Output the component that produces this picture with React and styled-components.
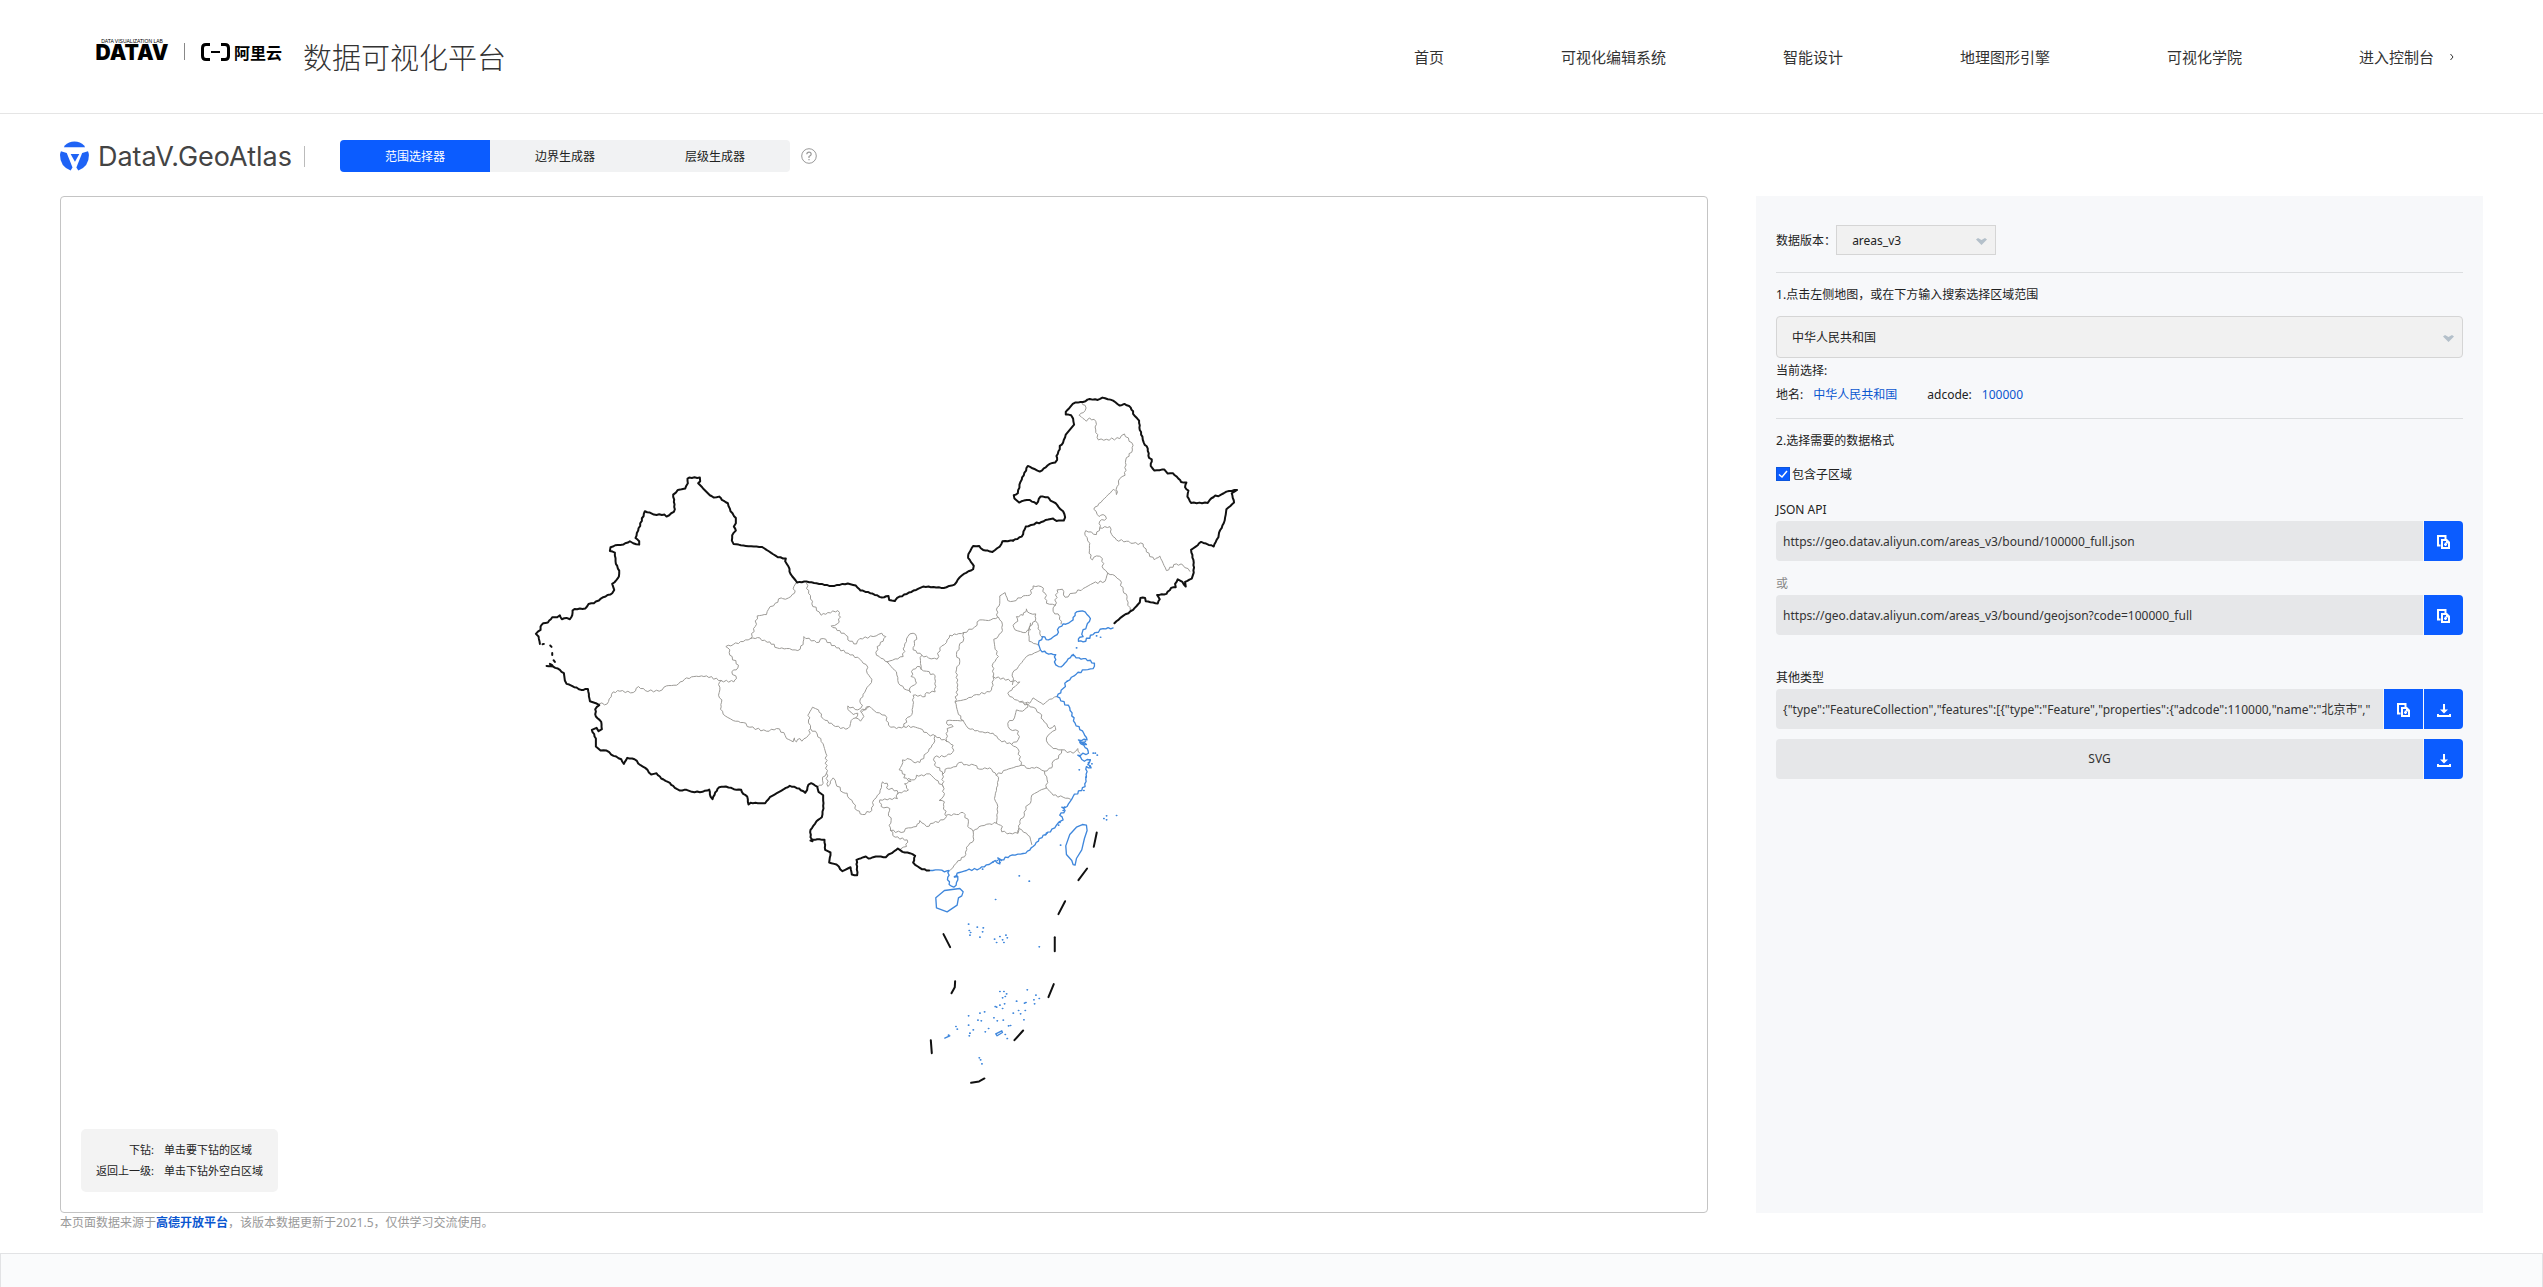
import React from 'react'
import styled, { createGlobalStyle } from 'styled-components'

const GlobalStyle = createGlobalStyle`
  * { box-sizing: border-box; }
  body {
    margin: 0;
    background: #fff;
    color: #222;
    font-family: "Noto Sans", "Noto Sans CJK SC", sans-serif;
    font-size: 12px;
  }
  a { text-decoration: none; }
  button, input, select { font: inherit; color: inherit; }
`

// ---------- header ----------

const Header = styled.header`
  display: flex;
  align-items: center;
  justify-content: space-between;
  height: 114px;
  padding: 0 89px 0 94px;
  border-bottom: 1px solid #e5e5e5;
`

const Brand = styled.div`
  display: flex;
  align-items: flex-start;
  height: 36px;
`

const DatavLogo = styled.div`
  display: flex;
  flex-direction: column;
  align-items: center;
  width: 76px;
  color: #000;
  font-family: Inter, "Liberation Sans", sans-serif;
  font-optical-sizing: none;
`

const LogoCaption = styled.span`
  font-family: "Liberation Sans", sans-serif;
  font-size: 5px;
  line-height: 5px;
  white-space: nowrap;
`

const LogoName = styled.span`
  font-size: 21px;
  font-weight: 900;
  line-height: 17px;
`

const Split = styled.span`
  width: 1px;
  height: ${p => p.$height};
  margin: ${p => p.$margin};
  background: ${p => p.$color};
`

const AliyunLogo = styled.div`
  display: flex;
  align-items: center;
  gap: 4px;
  height: 26px;
  color: #000;
  font-size: 16px;
  font-weight: 700;
`

const SiteTitle = styled.h1`
  margin: 0 0 0 21px;
  color: #333;
  font-size: 29px;
  font-weight: 300;
  line-height: 38px;
`

const Nav = styled.nav`
  display: flex;
  align-items: center;
  gap: 117px;
`

const NavLink = styled.a`
  display: flex;
  align-items: center;
  gap: 16px;
  color: #333;
  font-size: 15px;
  line-height: 20px;
`

// ---------- toolbar ----------

const Page = styled.div`
  padding: 26px 60px 0;
`

const Toolbar = styled.div`
  display: flex;
  align-items: center;
  height: 32px;
  margin-bottom: 24px;
`

const GeoLogo = styled.div`
  display: flex;
  align-items: center;
  gap: 9px;
  width: 232px;
  color: #444;
  font-family: Inter, sans-serif;
  font-optical-sizing: none;
  font-size: 27px;
  font-weight: 400;
  white-space: nowrap;
`

const Tabs = styled.div`
  display: flex;
  border-radius: 4px;
  overflow: hidden;
`

const Tab = styled.button`
  width: 150px;
  height: 32px;
  padding: 0;
  border: 0;
  background: ${p => (p.$active ? '#0b5cff' : '#f1f2f3')};
  color: ${p => (p.$active ? '#fff' : '#222')};
  cursor: pointer;
`

const HelpButton = styled.button`
  display: flex;
  margin-left: 11px;
  padding: 0;
  border: 0;
  background: none;
  color: #999;
`

// ---------- main columns ----------

const Columns = styled.div`
  display: flex;
  justify-content: space-between;
`

const MapColumn = styled.main`
  width: 68%;
`

const MapPanel = styled.div`
  position: relative;
  border: 1px solid #c4c4c4;
  border-radius: 4px;
`

const MapSvg = styled.svg`
  display: block;
  width: 100%;
  height: auto;
  fill: none;
  stroke-linejoin: round;
  stroke-linecap: round;
`

const Legend = styled.dl`
  position: absolute;
  left: 20px;
  bottom: 20px;
  display: grid;
  grid-template-columns: auto auto;
  column-gap: 10px;
  margin: 0;
  padding: 10px 15px 11px;
  border-radius: 5px;
  background: #f3f3f3;
  font-size: 11px;
  line-height: 21px;

  dt { text-align: right; }
  dd { margin: 0; }
`

const Source = styled.p`
  margin: 0;
  color: #999;
  line-height: 20px;

  a { color: #0b57d0; font-weight: 700; }
`

const Side = styled.aside`
  width: 30%;
  margin-bottom: 20px;
  padding: 29px 20px;
  background: #f7f8fa;
`

const SideSection = styled.section`
  padding-bottom: ${p => p.$bottom};
  margin-bottom: 12px;
  border-bottom: 1px solid #dcdee0;
`

const Row = styled.div`
  display: flex;
  align-items: center;
`

const StepTitle = styled.h2`
  display: block;
  margin: 0;
  font-size: 12px;
  font-weight: 400;
  line-height: 20px;
`

const SelectBox = styled.div`
  position: relative;
  width: ${p => p.$width};
  margin: ${p => p.$margin || '0'};
  color: #b4c0ca;

  svg {
    position: absolute;
    right: 9px;
    top: 50%;
    margin-top: -2px;
    pointer-events: none;
  }
`

const Select = styled.select`
  appearance: none;
  display: block;
  width: 100%;
  height: ${p => p.$height};
  padding: 0 15px;
  border: 1px solid #d5d5d5;
  border-radius: ${p => p.$radius};
  background: #f1f1f1;
  color: #222;
`

const Current = styled.div`
  line-height: 24px;
`

const Value = styled.a`
  margin: 0 30px 0 10px;
  color: #0b57d0;
`

const CheckLabel = styled.label`
  position: relative;
  display: flex;
  align-items: center;
  gap: 2px;
  height: 20px;
  margin: 13px 0 15px;

  input {
    appearance: none;
    width: 14px;
    height: 14px;
    margin: 0;
    border: 1px solid #777;
    background: #fff;
  }
  input:checked { border-color: #0b55dd; background: #0b5cff; }
  svg { position: absolute; left: 0; display: none; }
  input:checked + svg { display: block; }
`

const FieldLabel = styled.label`
  display: block;
  color: ${p => p.$color || '#222'};
  line-height: 22px;
`

const Field = styled.div`
  display: flex;
  gap: 1px;
  height: 40px;
  margin-bottom: ${p => p.$bottom || '0'};
  border-radius: 4px;
  overflow: hidden;
`

const FieldInput = styled.input`
  flex: 1;
  min-width: 0;
  padding: 0 7px;
  border: 0;
  background: #e6e7e9;
  color: #333;
`

const FieldText = styled.div`
  flex: 1;
  background: #e6e7e9;
  color: #333;
  line-height: 40px;
  text-align: center;
`

const FieldButton = styled.button`
  display: flex;
  align-items: center;
  justify-content: center;
  width: 39px;
  padding: 2px 0 0;
  border: 0;
  background: #0b5cff;
  color: #fff;
  cursor: pointer;
`

const Footer = styled.footer`
  height: 34px;
  margin-top: 20px;
  border: 1px solid #e2e3e5;
  border-bottom: 0;
  background: #fafbfc;
`

// ---------- icons ----------

const BracketIcon = () => (
  <svg width="29" height="18" viewBox="0 0 29 18" fill="none" stroke="currentColor">
    <path d="M9 1.5H5Q1.5 1.5 1.5 5v8q0 3.500 3.500 3.500h4M20 1.500h4q3.500 0 3.500 3.500v8q0 3.500-3.500 3.500h-4" strokeWidth="3" />
    <path d="M10 9h9" strokeWidth="2" />
  </svg>
)

const GeoIcon = () => (
  <svg width="30" height="30" viewBox="0 0 30 30" fill="#1f63f5">
    <path d="M5 4Q9 0 15 0t10 4l1 2H4z" />
    <path d="M1 10l6 2 6 15-2 3Q0 26 0 14q0-2 1-4z" />
    <path d="M29 10l-6 2-6 15 2 3q11-4 11-16 0-2-1-4z" />
    <path d="M11 13h9l-4.500 8z" />
  </svg>
)

const HelpIcon = () => (
  <svg width="16" height="16" viewBox="0 0 16 16" fill="none" stroke="currentColor">
    <circle cx="8" cy="8" r="7.300" />
    <path d="M5.800 6.300Q5.900 4.200 8 4.200t2.200 2Q10.200 7.400 8 8.500v1.500M8 11v1.200" strokeWidth="1.200" />
  </svg>
)

const ArrowIcon = () => (
  <svg width="11" height="7" viewBox="0 0 11 7" fill="currentColor">
    <path d="M0 1.500L2 0l3.500 2L9 0l2 1.500L5.500 7z" />
  </svg>
)

const CheckIcon = () => (
  <svg width="14" height="14" viewBox="0 0 14 14" fill="none" stroke="#fff">
    <path d="M3 7.500L6 10l5-6" strokeWidth="1.500" />
  </svg>
)

const ChevronIcon = () => (
  <svg width="4" height="8" viewBox="0 0 4 8" fill="none" stroke="currentColor">
    <path d="M.5 1L3 4 .5 7" />
  </svg>
)

const CopyIcon = () => (
  <svg width="13" height="14" viewBox="0 0 13 14" fill="none" stroke="currentColor">
    <path d="M3.500 10.500H1V1h7.500v3" strokeWidth="2" />
    <path d="M4 4h6l3 3v7H4z" fill="currentColor" stroke="none" />
    <path d="M6 6h3v2.500h2V12H6z" fill="#0b5cff" stroke="none" />
    <path d="M8.500 7.500V11M7 9.500h3" strokeWidth="1.500" />
  </svg>
)

const DownloadIcon = () => (
  <svg width="14" height="13" viewBox="0 0 14 13" fill="currentColor">
    <path d="M6 0h2v5.500h3L7 9.500l-4-4h3zM0 10h2v1h10v-1h2v3H0z" />
  </svg>
)

// ---------- map ----------

// Outlines are split into sheets; each sheet has its own origin in map units.
const SHEETS = {
  west: [1377, 549],
  center: [2157, 1029],
  north: [2697, 549],
  south: [2517, 1929],
  tibet: [1437, 1329],
}

const BORDERS = [
  ['west', '60 792 56 770 48 762 62 750 62 740 70 730 84 728 97 712 112 712 120 706 126 718 140 714 150 718 157 706 158 692 164 687 196 686 206 672 222 670 250 652 277 640 283 630 277 612 290 600 297 590 298 572 288 552 285 518 270 513 272 502 286 496 310 494 330 484 340 490 358 494 358 484 347 474 375 394 390 398 402 404 434 404 440 410 462 396 465 388 460 344 474 330 496 326 504 310 503 296 508 293 540 293 541 304 535 310 570 346 582 353 598 350 606 360 624 370 632 394 648 414 648 430 642 440 648 452 637 466 636 482 641 492 686 499 726 501 774 532 798 536 796 544 806 560 812 582 832 608 860 605 936 618 984 611 1008 617 1022 632 1044 636 1086 653 1106 648 1108 660 1125 663'],
  ['center', '345 183 352 174 430 140 492 144 524 134 540 112 552 102 580 88 582 78 565 54 566 42 580 18 598 18 610 30 638 36 660 20 668 4 700 2'],
  ['north', '160 482 186 470 198 440 222 434 230 428 238 430 258 420 280 416 290 423 312 422 316 412 310 394 300 386 288 370 272 362 265 352 242 350 230 372 210 360 192 362 178 368 164 356 162 346 174 340 182 306 204 258 240 275 270 252 286 248 292 240 290 228 300 208 300 198 310 188 318 164 343 134 340 116 334 106 318 104 318 96 334 78 346 68 370 66 390 57 414 60 428 53 460 62 480 77 494 72 508 78 520 94 520 102 538 122 540 150 548 170 552 188 564 206 568 234 576 238 573 258 584 272 614 269 624 281 640 280 656 296 664 306 680 308 676 322 686 332 683 350 694 369 744 369 750 360 766 347 776 349 800 335 832 330 816 340 823 368 800 388 798 404 792 430 778 458 776 472 768 486 762 500 724 486 708 500 694 510 702 548 702 578 696 596 676 606 678 620 668 606 654 598 646 612 648 622 634 624 620 642 592 645 600 658 594 671 558 664 556 654 542 654 540 668 520 690 490 708 464 730'],
  ['tibet', '20 78 40 80 30 72 40 80 60 90 72 100 75 122 80 132 96 138 124 150 144 147 150 184 168 190 178 196 166 208 168 230 184 246 186 268 176 274 170 264 156 270 168 296 168 320 182 332 200 332 214 344 244 358 252 372 262 354 284 358 302 376 316 384 334 404 350 400 364 416 384 426 400 438 412 448 420 452 440 450 456 456 488 456 508 449 512 470 518 478 526 458 538 442 558 440 590 450 604 450 610 462 622 470 626 494 632 489 676 490 690 472 732 448 750 438 778 446 796 459 802 450 806 434 814 430 832 440 836 456 850 466 851 506 846 532 830 544 812 570 812 592 818 604 812 602 832 598 854 600 856 630 872 638 868 668 890 674 908 694 932 682 936 704 952 706 952 680 950 660 978 650 986 656 1000 652 1016 650 1038 652 1046 644 1056 640 1074 626 1088 636 1110 640 1126 648 1120 668 1134 680 1146 688 1168 692'],
]

const PROVINCES = [
  ['west', '828 610 822 620 824 640 806 654 788 656 784 654 766 670 746 688 740 704 712 708 706 740 692 776'],
  ['west', '692 776 640 794 618 800 630 810 630 826 656 856 654 864 636 876 650 896 642 906 604 902'],
  ['west', '238 972 262 972 280 936 300 934 340 938 356 920 376 932 418 934 440 918 470 916 494 898 522 890 560 888 604 902'],
  ['west', '692 776 720 774 726 782 750 786 772 804 800 806 834 812 850 794 852 770 890 788 910 776 950 804 985 820 1020 838 1030 850 1044 862 1042 880 1056 898 1048 916 1038 930 1020 964 1028 976 1014 990 984 978 984 988 1000 1004 1014 1000 1008 1014 1022 1024 1032 1010 1022 994 1048 980'],
  ['west', '604 902 596 914 600 930 596 946 606 960 602 988 616 1008 640 1022 670 1028 690 1042 740 1054 770 1046 792 1058 800 1076 820 1086 824 1074 830 1086 840 1076 846 1084 866 1066 872 1046 866 1020 868 1000 878 982 896 990 910 1016 940 1036 978 1048 990 1040 994 1022 1008 1014'],
  ['west', '860 610 866 640 878 664 876 672 898 696 904 706 924 698 954 692 962 712 952 732 934 738 978 766 990 784 1010 792 1020 776 1060 770 1086 760 1098 770 1090 784 1072 800 1070 826 1104 846'],
  ['center', '92 566 112 582 130 612 138 640 140 700 144 740 152 724 160 714 168 730 190 758 202 760 208 776 220 790 232 812 248 824 276 812 282 780 300 760 308 726 322 730 320 744 352 752 352 776'],
  ['center', '140 700 128 712 130 730 114 742'],
  ['center', '322 366 334 380 350 396 356 430 380 450 392 458 390 444 410 430 406 416 394 410 400 388 420 380 424 388 440 394 466 408 466 456 440 458 436 470 400 466 400 494 396 524 384 532 372 560'],
  ['center', '322 366 370 350 374 320 384 290 400 280 410 290 404 310 400 330 426 346 422 362 424 388'],
  ['center', '426 346 446 354 472 358 480 324 500 308 510 286 530 284 552 278'],
  ['center', '246 516 270 500 290 518 316 526 326 556 350 566 372 560 400 560 420 566 446 584 466 588 500 604'],
  ['center', '466 588 462 610 440 640 420 668 400 666 390 658 368 660 366 676 358 690 376 704 372 714 394 724 374 732 386 750 352 762'],
  ['center', '386 716 404 720 410 706 432 708 450 702 468 720 490 740'],
  ['center', '352 776 300 780 304 800 330 806 326 820 334 842 328 856 332 872 346 892 382 900 380 920 362 928'],
  ['center', '332 872 364 878 386 864 410 860 420 842 440 860 460 850 490 840 500 830 492 800 494 786 478 782 492 768 490 740 488 704 480 684 464 676 464 652 500 648 518 638 520 616 500 604'],
  ['center', '500 604 502 566 520 560 500 550 502 542 550 542'],
  ['center', '488 704 496 688 530 680 538 668 560 674 584 676 600 688 630 684 650 706'],
  ['center', '552 278 552 296 538 320 530 344 540 364 530 390 534 450 526 486 536 524 550 542 564 564 600 576 640 580 660 600 696 614'],
  ['center', '526 486 560 478 590 464 630 456 640 436 640 410'],
  ['center', '552 278 584 262 600 240 626 242 654 232 650 210 660 190 660 168 676 158 684 182 700 184 730 168 750 166 760 138 784 140 796 160 800 190 826 196'],
  ['center', '656 232 666 246 668 272 656 288 642 298 646 328 656 350 640 370 640 410 700 424 698 434'],
  ['center', '780 332 740 350 716 380 698 400 700 424 720 426 706 440 684 460 690 470 720 486 750 490 760 474 790 494 810 478 832 470'],
  ['center', '740 208 750 220 768 222 766 244 750 258 752 270 730 278 706 270 700 256 714 244 710 230 730 226 740 208'],
  ['center', '768 244 776 260 780 280 788 292'],
  ['center', '752 250 746 268 748 304 776 316'],
  ['center', '826 196 820 214 840 230 844 252'],
  ['center', '826 196 832 150 848 148 856 172 880 160 910 146 940 130 976 124 984 100'],
  ['center', '740 490 744 502 728 514 710 510 704 534 684 550 690 568 716 574 716 598 696 614 714 626 724 676'],
  ['center', '720 486 760 502 780 520 790 540 810 566 824 556 828 570 812 580 800 594 804 610 820 626 846 630 880 640 894 626 900 640'],
  ['center', '846 630 836 656 820 664 816 684 794 694'],
  ['center', '650 706 680 690 724 676 750 686 770 682 794 694 802 720 800 744'],
  ['center', '650 706 656 720 644 776 654 800 650 850'],
  ['center', '800 744 780 752 756 766 752 790 738 800 734 826 720 844 714 880'],
  ['center', '800 744 820 766 850 772 872 778'],
  ['center', '500 826 530 824 550 818 566 846 564 860 580 874 604 858 630 852 650 850 668 860 666 876 690 880 714 880 716 866 740 880 750 890 756 914'],
  ['center', '580 874 582 900 560 922 558 944 530 970 512 990'],
  ['north', '444 580 430 566 428 536 410 528 398 540 388 520 390 490 376 466 378 452 410 464 420 444 450 440 456 464 470 480 500 484 520 490 550 492 560 516 584 540 600 528 620 572 650 552 670 556 690 574'],
  ['north', '420 444 420 424 440 416 430 404 418 410 402 388 462 328 470 344 472 320 480 296 496 286 498 240 518 210 520 196 494 162 480 176 440 178 416 180 408 150 408 124 390 114 380 124 358 106 376 92 376 76 366 68'],
  ['north', '444 580 466 588 480 600 490 632 502 650 504 676 512 692'],
]

const COAST = [
  ['center', '1000 264 970 266 940 284 910 306 896 304 900 292 910 290 908 276 920 260 932 236 916 216 900 214 886 220 880 240 866 250 850 252 838 262 832 284 806 300 788 290 776 312 782 330 800 340 828 344 824 366 836 380 850 376 876 346 904 358 918 356 944 370 940 386 916 390 890 402 862 424 850 446 832 470 870 504 886 550 912 580 922 600 896 600 920 614 900 608 922 626 926 640 894 646 914 664 932 660 924 674 934 684 920 680 920 710 916 740 880 770 862 800 846 802 856 812 840 826 850 840 838 846 830 856 812 876 790 886 760 920 738 940 690 948 664 960 654 954 660 972 646 962 634 970 600 986 560 992 532 1000 524 1012 534 1010 530 1028 522 1042 508 1034 504 1012 508 992 494 996 476 990 450 992'],
]

const ISLANDS = [
  ['center', '908 854 920 856 922 872 914 896 906 930 890 956 886 976 880 974 876 962 860 944 858 918 870 884 890 862 908 854'],
  ['south', '134 152 180 146 190 156 186 168 176 174 172 196 142 216 110 204 108 174 134 152'],
  ['south', '288 582 306 573 308 578 292 588 288 582'],
  ['south', '135 595 150 588'],
]

const DASHES = [
  ['west', '68 793 72 792'],
  ['west', '91 797 95 801'],
  ['west', '97 819 97 825'],
  ['west', '101 841 105 846'],
  ['center', '951 878 942 921'],
  ['south', '536 121 562 86'],
  ['south', '476 223 496 184'],
  ['south', '465 292 465 334'],
  ['south', '446 472 462 433'],
  ['south', '344 601 370 572'],
  ['south', '214 729 238 725 254 716'],
  ['south', '93 601 96 640'],
  ['south', '166 424 165 442 155 460'],
  ['south', '131 283 151 322'],
]

const ISLETS = [
  ['center', '862 424 916 604 910 610 930 660 926 668 936 672 930 680 946 640 952 646 940 640 918 712 854 802 850 812 840 848 836 856 796 884 800 880 652 962 660 968 640 966 664 962 524 1010 530 1008 608 988 748 1024 718 1008 972 836 980 840 1010 827 980 828 842 916 950 288 962 292 880 344 890 324 898 690 912 752'],
  ['south', '206 253 208 272 212 278 210 286 232 262 240 292 248 276 250 264 284 298 290 308 300 290 308 300 318 286 322 294 312 308 418 321 287 179 300 455 312 455 308 474 316 470 320 462 286 500 290 502 308 506 314 492 300 496 350 484 378 488 374 490 402 480 408 466 418 476 404 492 356 512 362 522 376 512 340 520 382 450 292 543 310 541 254 516 234 541 244 543 206 556 220 570 210 580 208 588 332 557 326 558 266 566 256 576 282 534 316 584 322 596 372 540 172 568 238 654 242 660 246 672 206 528 240 520 168 560 146 586'],
]

// Breaks long segments into short uneven ones, the same way on every render.
function roughen(points, amount) {
  const n = points.split(' ').map(Number)
  const out = [[n[0], n[1]]]
  for (let i = 2; i < n.length; i += 2) {
    const [x0, y0] = [n[i - 2], n[i - 1]]
    const dx = n[i] - x0
    const dy = n[i + 1] - y0
    const len = Math.hypot(dx, dy)
    const steps = Math.max(1, Math.round(len / 8))
    for (let s = 1; s < steps; s++) {
      const shift = Math.sin(x0 * 7 + y0 * 3 + s * 91) * amount
      out.push([x0 + (dx * s) / steps - (dy / len) * shift, y0 + (dy * s) / steps + (dx / len) * shift])
    }
    out.push([n[i], n[i + 1]])
  }
  return out.map(p => p.map(Math.round).join(' ')).join(' ')
}

function Lines({ data, rough = 0, ...rest }) {
  return (
    <g {...rest}>
      {data.map(([sheet, points], i) => (
        <polyline
          key={i}
          transform={`translate(${SHEETS[sheet].join(' ')})`}
          points={rough ? roughen(points, rough) : points}
        />
      ))}
    </g>
  )
}

function Dots({ data, ...rest }) {
  return (
    <g {...rest}>
      {data.map(([sheet, points]) => {
        const d = points.split(' ').reduce((acc, v, i) => acc + (i % 2 ? ` ${v}h1` : `M${v}`), '')
        return <path key={sheet} transform={`translate(${SHEETS[sheet].join(' ')})`} d={d} />
      })}
    </g>
  )
}

const ChinaMap = () => (
  <MapSvg viewBox="0 0 4938 3045" role="img" aria-label="中华人民共和国">
    <Lines data={PROVINCES} rough={3} stroke="#9c9a96" strokeWidth="3" />
    <Lines data={COAST} rough={3} stroke="#3f87dc" strokeWidth="4" />
    <Lines data={ISLANDS} stroke="#3f87dc" strokeWidth="4" />
    <Dots data={ISLETS} stroke="#3f87dc" strokeWidth="5" />
    <Lines data={BORDERS} rough={1} stroke="#111" strokeWidth="6" />
    <Lines data={DASHES} stroke="#111" strokeWidth="6" />
  </MapSvg>
)

// ---------- page ----------

const navItems = ['首页', '可视化编辑系统', '智能设计', '地理图形引擎', '可视化学院']
const tabs = ['范围选择器', '边界生成器', '层级生成器']

export default function App() {
  return (
    <>
      <GlobalStyle />
      <Header>
        <Brand>
          <DatavLogo>
            <LogoCaption>DATA VISUALIZATION LAB</LogoCaption>
            <LogoName>DATAV</LogoName>
          </DatavLogo>
          <Split $height="17px" $margin="4px 16px 0 14px" $color="#888" />
          <AliyunLogo>
            <BracketIcon />
            阿里云
          </AliyunLogo>
          <SiteTitle>数据可视化平台</SiteTitle>
        </Brand>
        <Nav>
          {navItems.map(item => (
            <NavLink key={item} href="#">{item}</NavLink>
          ))}
          <NavLink href="#">
            进入控制台
            <ChevronIcon />
          </NavLink>
        </Nav>
      </Header>

      <Page>
        <Toolbar>
          <GeoLogo>
            <GeoIcon />
            DataV.GeoAtlas
          </GeoLogo>
          <Split $height="21px" $margin="0 35px 0 12px" $color="#bbb" />
          <Tabs>
            {tabs.map((tab, i) => (
              <Tab key={tab} type="button" $active={i === 0}>{tab}</Tab>
            ))}
          </Tabs>
          <HelpButton type="button" aria-label="帮助">
            <HelpIcon />
          </HelpButton>
        </Toolbar>

        <Columns>
          <MapColumn>
            <MapPanel>
              <ChinaMap />
              <Legend>
                <dt>下钻:</dt>
                <dd>单击要下钻的区域</dd>
                <dt>返回上一级:</dt>
                <dd>单击下钻外空白区域</dd>
              </Legend>
            </MapPanel>
            <Source>
              本页面数据来源于<a href="#">高德开放平台</a>，该版本数据更新于2021.5，仅供学习交流使用。
            </Source>
          </MapColumn>

          <Side>
            <SideSection $bottom="17px">
              <Row>
                <label htmlFor="version">数据版本：</label>
                <SelectBox $width="160px">
                  <Select id="version" $height="30px" $radius="0">
                    <option>areas_v3</option>
                  </Select>
                  <ArrowIcon />
                </SelectBox>
              </Row>
            </SideSection>

            <SideSection $bottom="11px">
              <StepTitle as="label" htmlFor="area">1.点击左侧地图，或在下方输入搜索选择区域范围</StepTitle>
              <SelectBox $width="100%" $margin="11px 0 1px">
                <Select id="area" $height="42px" $radius="4px">
                  <option>中华人民共和国</option>
                </Select>
                <ArrowIcon />
              </SelectBox>
              <Current>当前选择:</Current>
              <Current>
                地名:<Value href="#">中华人民共和国</Value>
                adcode:<Value href="#">100000</Value>
              </Current>
            </SideSection>

            <StepTitle>2.选择需要的数据格式</StepTitle>
            <CheckLabel>
              <input type="checkbox" defaultChecked />
              <CheckIcon />
              包含子区域
            </CheckLabel>

            <FieldLabel htmlFor="api">JSON API</FieldLabel>
            <Field $bottom="12px">
              <FieldInput id="api" readOnly value="https://geo.datav.aliyun.com/areas_v3/bound/100000_full.json" />
              <FieldButton type="button" aria-label="复制"><CopyIcon /></FieldButton>
            </Field>
            <FieldLabel htmlFor="geojson" $color="#888">或</FieldLabel>
            <Field $bottom="32px">
              <FieldInput id="geojson" readOnly value="https://geo.datav.aliyun.com/areas_v3/bound/geojson?code=100000_full" />
              <FieldButton type="button" aria-label="复制"><CopyIcon /></FieldButton>
            </Field>

            <FieldLabel htmlFor="other">其他类型</FieldLabel>
            <Field $bottom="10px">
              <FieldInput
                id="other"
                readOnly
                value={'{"type":"FeatureCollection","features":[{"type":"Feature","properties":{"adcode":110000,"name":"北京市","'}
              />
              <FieldButton type="button" aria-label="复制"><CopyIcon /></FieldButton>
              <FieldButton type="button" aria-label="下载"><DownloadIcon /></FieldButton>
            </Field>
            <Field>
              <FieldText>SVG</FieldText>
              <FieldButton type="button" aria-label="下载"><DownloadIcon /></FieldButton>
            </Field>
          </Side>
        </Columns>
      </Page>
      <Footer />
    </>
  )
}
